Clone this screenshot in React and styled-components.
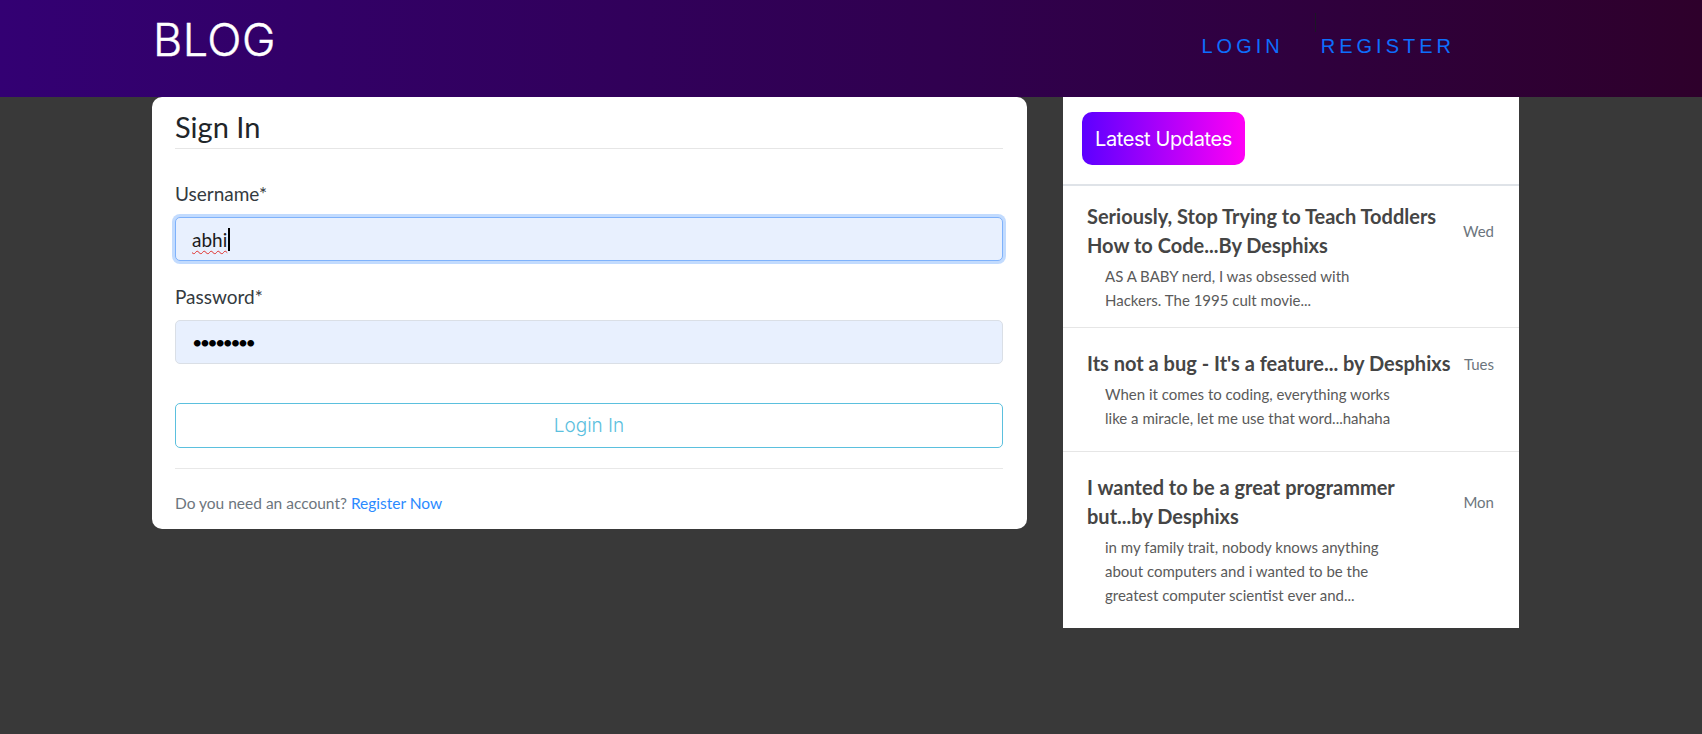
import React from 'react';
import styled, { createGlobalStyle } from 'styled-components';

const GlobalStyle = createGlobalStyle`
  html, body {
    margin: 0;
    padding: 0;
  }
  body {
    background: #393939;
    font-family: 'Lato', 'Open Sans', sans-serif;
    min-height: 734px;
  }
`;

const Header = styled.header`
  height: 97px;
  box-sizing: border-box;
  display: flex;
  align-items: flex-start;
  padding-left: 153px;
  background: linear-gradient(90deg, #330073 0%, #30004f 55%, #2e002b 100%);
`;

const Brand = styled.a`
  margin-top: 18px;
  font-family: 'Inter', sans-serif;
  font-weight: 300;
  font-size: 45px;
  line-height: 44px;
  letter-spacing: 0.5px;
  color: #fff;
  text-decoration: none;
  -webkit-text-stroke: 0.4px #fff;
`;

const Nav = styled.nav`
  margin-left: auto;
  margin-right: 247px;
  padding-top: 35px;
  display: flex;
  gap: 37px;
`;

const NavLink = styled.a`
  position: relative;
  font-family: 'Liberation Sans', Arial, sans-serif;
  font-size: 20px;
  line-height: 23px;
  letter-spacing: 4px;
  color: #0d6efd;
  text-decoration: none;

  ${p => p.$divider && `
    &::before {
      content: '';
      position: absolute;
      left: -6px;
      top: -22px;
      width: 1px;
      height: 19px;
      background: #1c1626;
    }
  `}
`;

const Main = styled.main`
  display: flex;
  align-items: flex-start;
  gap: 36px;
  padding-left: 152px;
`;

const LoginCard = styled.section`
  width: 875px;
  box-sizing: border-box;
  background: #fff;
  border-radius: 10px;
  padding: 12px 24px 14px 23px;
`;

const CardTitle = styled.h2`
  margin: 0 0 33px;
  padding-bottom: 3px;
  border-bottom: 1px solid #e6e6e6;
  font-size: 29px;
  line-height: 36px;
  font-weight: 400;
  color: #212529;
`;

const Label = styled.label`
  display: block;
  margin-top: 24px;
  font-size: 19px;
  line-height: 24px;
  color: #343a40;
`;

const Field = styled.div`
  height: 44px;
  box-sizing: border-box;
  margin-top: 11px;
  display: flex;
  align-items: center;
  padding: 0 16px;
  border-radius: 5px;
  background: #e8f0fe;
  border: 1px solid ${p => (p.$focused ? '#7fb2fb' : '#dadfe6')};
  box-shadow: ${p => (p.$focused ? '0 0 0 3px rgba(13, 110, 253, 0.25)' : 'none')};
  font-size: 19px;
  color: #1b1b1b;
`;

const Typed = styled.span`
  text-decoration: underline wavy #e0302c;
  text-decoration-thickness: 1px;
  text-underline-offset: 3px;
`;

const Caret = styled.span`
  width: 2px;
  height: 23px;
  margin-left: 1px;
  background: #000;
`;

const Dots = styled.span`
  font-size: 18px;
  letter-spacing: -2.8px;
  color: #000;
`;

const SubmitButton = styled.button`
  width: 100%;
  height: 45px;
  margin-top: 39px;
  background: #fff;
  border: 1px solid #5bc0de;
  border-radius: 5px;
  font-family: 'Inter', sans-serif;
  font-weight: 300;
  font-size: 19px;
  color: #5bc0de;
  cursor: pointer;
`;

const Divider = styled.hr`
  margin: 20px 0 0;
  border: 0;
  border-top: 1px solid #e8e8e8;
`;

const FooterText = styled.p`
  margin: 22px 0 0;
  font-size: 15.5px;
  line-height: 24px;
  color: #6c757d;
`;

const TextLink = styled.a`
  color: #2b8aff;
  text-decoration: none;
`;

const UpdatesPanel = styled.aside`
  width: 456px;
  background: #fff;
`;

const PanelHead = styled.div`
  padding: 15px 19px 19px;
  border-bottom: 2px solid #dfe3e8;
`;

const Badge = styled.span`
  display: inline-flex;
  align-items: center;
  height: 53px;
  padding: 0 13px;
  border-radius: 10px;
  background: linear-gradient(90deg, #5c00ff 0%, #ff00f5 100%);
  font-family: 'Inter', sans-serif;
  font-size: 20px;
  letter-spacing: -0.4px;
  color: #fff;
`;

const UpdateItem = styled.article`
  padding: 21px 25px 21px 24px;
  border-bottom: 1px solid #e6e6e6;

  &:first-of-type {
    padding-top: 16px;
    padding-bottom: 15px;
  }
  &:last-child {
    border-bottom: none;
  }
`;

const ItemHead = styled.div`
  display: flex;
  align-items: center;
  justify-content: space-between;
  gap: 8px;
`;

const ItemTitle = styled.h3`
  margin: 0;
  font-size: 20px;
  line-height: 29px;
  font-weight: 700;
  color: #454545;
`;

const ItemDate = styled.span`
  flex-shrink: 0;
  font-size: 15px;
  color: #6c757d;
`;

const ItemText = styled.p`
  margin: 4px 0 0 18px;
  max-width: 300px;
  font-size: 15px;
  line-height: 24px;
  color: #5a5a5a;
`;

const updates = [
  {
    title: 'Seriously, Stop Trying to Teach Toddlers How to Code...By Desphixs',
    day: 'Wed',
    text: 'AS A BABY nerd, I was obsessed with Hackers. The 1995 cult movie...',
  },
  {
    title: "Its not a bug - It's a feature... by Desphixs",
    day: 'Tues',
    text: 'When it comes to coding, everything works like a miracle, let me use that word...hahaha',
  },
  {
    title: 'I wanted to be a great programmer but...by Desphixs',
    day: 'Mon',
    text: 'in my family trait, nobody knows anything about computers and i wanted to be the greatest computer scientist ever and...',
  },
];

export default function App() {
  return (
    <>
      <GlobalStyle />
      <Header>
        <Brand href="#">BLOG</Brand>
        <Nav>
          <NavLink href="#">LOGIN</NavLink>
          <NavLink href="#" $divider>REGISTER</NavLink>
        </Nav>
      </Header>

      <Main>
        <LoginCard>
          <CardTitle>Sign In</CardTitle>
          <Label>Username*</Label>
          <Field $focused>
            <Typed>abhi</Typed>
            <Caret />
          </Field>
          <Label>Password*</Label>
          <Field>
            <Dots>••••••••</Dots>
          </Field>
          <SubmitButton type="button">Login In</SubmitButton>
          <Divider />
          <FooterText>
            Do you need an account? <TextLink href="#">Register Now</TextLink>
          </FooterText>
        </LoginCard>

        <UpdatesPanel>
          <PanelHead>
            <Badge>Latest Updates</Badge>
          </PanelHead>
          {updates.map(u => (
            <UpdateItem key={u.day}>
              <ItemHead>
                <ItemTitle>{u.title}</ItemTitle>
                <ItemDate>{u.day}</ItemDate>
              </ItemHead>
              <ItemText>{u.text}</ItemText>
            </UpdateItem>
          ))}
        </UpdatesPanel>
      </Main>
    </>
  );
}
